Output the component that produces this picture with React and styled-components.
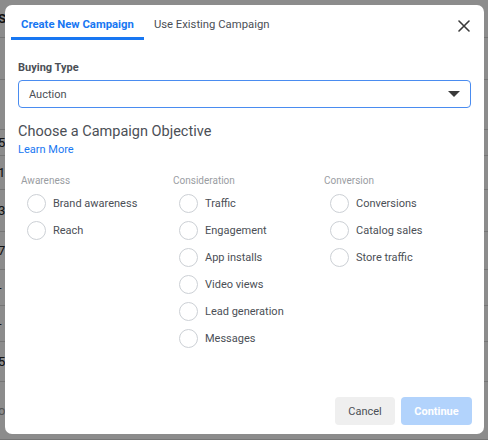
import React, { useState } from "react";
import styled, { createGlobalStyle } from "styled-components";

const GlobalStyle = createGlobalStyle`
  html, body {
    margin: 0;
    padding: 0;
    width: 488px;
    height: 440px;
    overflow: hidden;
    font-family: Roboto, "Liberation Sans", Arial, sans-serif;
  }
`;

const objectives = [
  {
    title: "Awareness",
    items: ["Brand awareness", "Reach"],
  },
  {
    title: "Consideration",
    items: [
      "Traffic",
      "Engagement",
      "App installs",
      "Video views",
      "Lead generation",
      "Messages",
    ],
  },
  {
    title: "Conversion",
    items: ["Conversions", "Catalog sales", "Store traffic"],
  },
];

// rows of the page that sits behind the dimmed overlay
const pageRows = [
  { h: 38, text: "S", bold: true },
  { h: 42, text: "" },
  { h: 50, text: "" },
  { h: 26, text: "5" },
  { h: 34, text: "1" },
  { h: 42, text: "3" },
  { h: 38, text: "7" },
  { h: 36, text: "-" },
  { h: 36, text: "-" },
  { h: 40, text: "5:" },
  { h: 58, text: "o", light: true },
];

const App = () => {
  const [tab, setTab] = useState(0);
  const [selected, setSelected] = useState(null);

  return (
    <Screen>
      <GlobalStyle />
      <Page aria-hidden="true">
        {pageRows.map((row, i) => (
          <PageRow key={i} style={{ height: row.h }}>
            <PageCell $bold={row.bold} $light={row.light}>
              {row.text}
            </PageCell>
          </PageRow>
        ))}
      </Page>
      <Overlay />

      <Modal>
        <TabBar>
          <Tab $active={tab === 0} onClick={() => setTab(0)}>
            Create New Campaign
          </Tab>
          <Tab $active={tab === 1} onClick={() => setTab(1)}>
            Use Existing Campaign
          </Tab>
          <CloseButton aria-label="Close">
            <svg width="12" height="12" viewBox="0 0 12 12">
              <path
                d="M1 1L11 11M11 1L1 11"
                stroke="#3a3a3a"
                strokeWidth="1.6"
                strokeLinecap="round"
              />
            </svg>
          </CloseButton>
        </TabBar>

        <Body>
          <Label>Buying Type</Label>
          <Select>
            <span>Auction</span>
            <Caret />
          </Select>

          <Heading>Choose a Campaign Objective</Heading>
          <LearnMore href="#">Learn More</LearnMore>

          <Columns>
            {objectives.map((group) => (
              <Column key={group.title}>
                <GroupTitle>{group.title}</GroupTitle>
                {group.items.map((item) => (
                  <Option key={item} onClick={() => setSelected(item)}>
                    <Radio $checked={selected === item} />
                    <OptionText>{item}</OptionText>
                  </Option>
                ))}
              </Column>
            ))}
          </Columns>
        </Body>

        <Footer>
          <CancelButton>Cancel</CancelButton>
          <ContinueButton disabled={!selected}>Continue</ContinueButton>
        </Footer>
      </Modal>
    </Screen>
  );
};

export default App;

const Screen = styled.div`
  position: relative;
  width: 488px;
  height: 440px;
  overflow: hidden;
  background: #ffffff;
`;

const Page = styled.div`
  display: flex;
  flex-direction: column;
`;

const PageRow = styled.div`
  display: flex;
  align-items: center;
  border-bottom: 1px solid #d8d8d8;
  box-sizing: border-box;
`;

const PageCell = styled.span`
  margin-left: -2px;
  font-size: 13px;
  font-weight: ${(p) => (p.$bold ? 700 : 400)};
  color: ${(p) => (p.$light ? "#9a9a9a" : "#222")};
`;

const Overlay = styled.div`
  position: absolute;
  inset: 0;
  background: rgba(0, 0, 0, 0.45);
`;

const Modal = styled.div`
  position: absolute;
  left: 5px;
  top: 5px;
  width: 479px;
  height: 429px;
  box-sizing: border-box;
  background: #ffffff;
  border-radius: 7px;
  display: flex;
  flex-direction: column;
`;

const TabBar = styled.div`
  display: flex;
  align-items: flex-end;
  padding-left: 6px;
  padding-right: 14px;
`;

const Tab = styled.button`
  border: none;
  background: none;
  padding: 13px 10px 5px;
  line-height: 14px;
  font-family: inherit;
  font-size: 11.3px;
  font-weight: ${(p) => (p.$active ? 700 : 400)};
  color: ${(p) => (p.$active ? "#1877f2" : "#4b4f56")};
  border-bottom: 3px solid ${(p) => (p.$active ? "#1877f2" : "transparent")};
  cursor: pointer;
`;

const CloseButton = styled.button`
  margin-left: auto;
  align-self: flex-start;
  margin-top: 15px;
  border: none;
  background: none;
  padding: 0;
  width: 12px;
  height: 12px;
  display: flex;
  cursor: pointer;
`;

const Body = styled.div`
  flex: 1;
  padding: 21px 13px 0;
  display: flex;
  flex-direction: column;
`;

const Label = styled.div`
  font-size: 11px;
  font-weight: 700;
  color: #4b4f56;
  line-height: 14px;
  margin-bottom: 5px;
`;

const Select = styled.div`
  height: 28px;
  box-sizing: border-box;
  border: 1px solid #4a8cf0;
  border-radius: 4px;
  display: flex;
  align-items: center;
  justify-content: space-between;
  padding: 0 10px 0 10px;
  font-size: 11px;
  color: #4b4f56;
`;

const Caret = styled.span`
  width: 0;
  height: 0;
  border-left: 6px solid transparent;
  border-right: 6px solid transparent;
  border-top: 6px solid #3a3a3a;
`;

const Heading = styled.div`
  margin-top: 14px;
  font-size: 14.5px;
  line-height: 20px;
  color: #4b4f56;
`;

const LearnMore = styled.a`
  font-size: 11px;
  line-height: 16px;
  color: #1877f2;
  text-decoration: none;
  align-self: flex-start;
`;

const Columns = styled.div`
  margin-top: 16px;
  padding-left: 3px;
  display: grid;
  grid-template-columns: 152px 151px 1fr;
`;

const Column = styled.div`
  display: flex;
  flex-direction: column;
`;

const GroupTitle = styled.div`
  font-size: 10px;
  line-height: 14px;
  color: #9a9da2;
  margin-bottom: 2px;
`;

const Option = styled.label`
  display: flex;
  align-items: center;
  gap: 7px;
  height: 27px;
  padding-left: 6px;
  cursor: pointer;
`;

const Radio = styled.span`
  width: 19px;
  height: 19px;
  box-sizing: border-box;
  border-radius: 50%;
  border: ${(p) => (p.$checked ? "6px solid #1877f2" : "1px solid #ccd0d5")};
  background: #ffffff;
  flex-shrink: 0;
`;

const OptionText = styled.span`
  font-size: 11px;
  color: #4b4f56;
`;

const Footer = styled.div`
  display: flex;
  justify-content: flex-end;
  gap: 6px;
  padding: 0 12px 9px;
`;

const BaseButton = styled.button`
  height: 28px;
  border: none;
  border-radius: 4px;
  font-family: inherit;
  font-size: 11px;
  cursor: pointer;
`;

const CancelButton = styled(BaseButton)`
  width: 60px;
  background: #efefef;
  color: #4b4f56;
`;

const ContinueButton = styled(BaseButton)`
  width: 71px;
  font-weight: 700;
  color: #ffffff;
  background: ${(p) => (p.disabled ? "#b2d3fc" : "#1877f2")};
  cursor: ${(p) => (p.disabled ? "default" : "pointer")};
`;
